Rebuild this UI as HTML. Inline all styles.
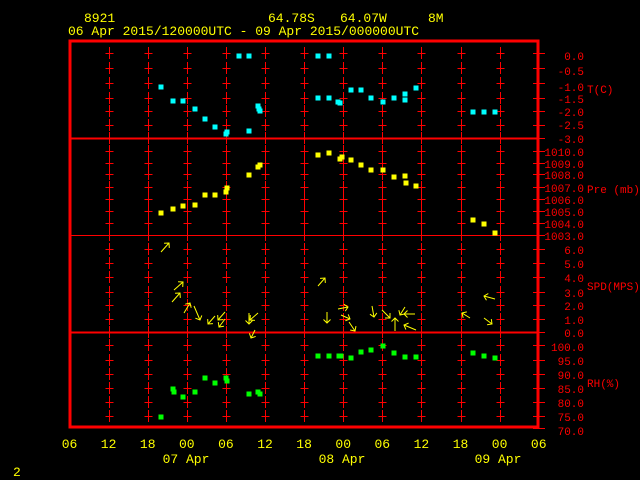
<!DOCTYPE html>
<html><head><meta charset="utf-8"><style>
html,body{margin:0;padding:0;background:#000;width:640px;height:480px;overflow:hidden}
svg{display:block}
text{font-family:"Liberation Mono","DejaVu Sans Mono",monospace}
</style></head><body>
<svg id="s" width="640" height="480" xmlns="http://www.w3.org/2000/svg">
<rect width="640" height="480" fill="#000"/>
<g fill="#ffff00" font-size="13">
<text x="84" y="22">8921</text>
<text x="268" y="22">64.78S</text>
<text x="340" y="22">64.07W</text>
<text x="428" y="22">8M</text>
<text x="68" y="35">06 Apr 2015/120000UTC - 09 Apr 2015/000000UTC</text>
<text x="13" y="476">2</text>
</g>
<g id="grid" stroke="#ff0000" stroke-width="1"></g>
<g id="pts"></g>
<g id="arr" stroke="#ffff00" stroke-width="1" fill="none"></g>
<g id="lab" fill="#ff0000" font-size="11"></g>
<g id="bl" fill="#ffff00" font-size="13" text-anchor="middle"></g>
</svg>
<script>
var NS="http://www.w3.org/2000/svg";
function el(p,t,a,txt){var e=document.createElementNS(NS,t);for(var k in a)e.setAttribute(k,a[k]);if(txt!==undefined)e.textContent=txt;document.getElementById(p).appendChild(e);return e;}
var cols=[];for(var i=1;i<12;i++)cols.push(69.5+39.1*i);
var ticks=[53,68,83,98,111,125,138,151,163,174,187,199,211,223,235,249,263,277,292,305,319,332,345,360,374,388,402,416];
var cross={138:0,235:0,332:0};
cols.forEach(function(x){x=Math.round(x)+0.5;
 ticks.forEach(function(y){
  el("grid","line",{x1:x,x2:x,y1:y-6,y2:y+6});
  if(!(y in cross)) el("grid","line",{x1:x-4,x2:x+4,y1:y+0.5,y2:y+0.5});
 });
});
// right-side ticks
ticks.forEach(function(y){el("grid","line",{x1:533,x2:545,y1:y+0.5,y2:y+0.5});});
el("grid","line",{x1:533,x2:545,y1:428.5,y2:428.5});
// dividers
el("grid","line",{x1:70,x2:538,y1:138.5,y2:138.5,"stroke-width":2});
el("grid","line",{x1:70,x2:538,y1:235.5,y2:235.5,"stroke-width":1});
el("grid","line",{x1:70,x2:538,y1:332.5,y2:332.5,"stroke-width":2});
// frame
el("grid","rect",{x:70,y:41,width:468,height:386,fill:"none","stroke-width":3});
// labels
var L=[["0.0",56],["-0.5",71],["-1.0",87],["-1.5",99],["-2.0",112],["-2.5",125],["-3.0",139],
["1010.0",152],["1009.0",164],["1008.0",175],["1007.0",188],["1006.0",200],["1005.0",212],["1004.0",224],["1003.0",236],
["6.0",250],["5.0",264],["4.0",278],["3.0",293],["2.0",306],["1.0",320],["0.0",333],
["100.0",347],["95.0",361],["90.0",375],["85.0",389],["80.0",403],["75.0",417],["70.0",431]];
L.forEach(function(l){el("lab","text",{x:584,y:l[1]+4,"text-anchor":"end"},l[0]);});
[["T(C)",89],["Pre (mb)",189],["SPD(MPS)",286],["RH(%)",383]].forEach(function(l){el("lab","text",{x:587,y:l[1]+4},l[0]);});
// bottom
var bt=["06","12","18","00","06","12","18","00","06","12","18","00","06"];
bt.forEach(function(t,i){el("bl","text",{x:69.5+39.1*i,y:448},t);});
[["07 Apr",186],["08 Apr",342],["09 Apr",498]].forEach(function(d){el("bl","text",{x:d[1],y:463},d[0]);});
// points
function P(c,a){a.forEach(function(p){el("pts","rect",{x:p[0]-2.5,y:p[1]-2.5,width:5,height:5,fill:c});});}
P("#00ffff",[[161,87],[173,101],[183,101],[195,109],[205,119],[215,127],[226,134],[227,132],[239,56],[249,56],[249,131],[258,106],[259,109],[260,111],[318,56],[329,56],[318,98],[329,98],[338,102],[340,103],[351,90],[361,90],[371,98],[383,102],[394,98],[405,100],[405,94],[416,88],[473,112],[484,112],[495,112]]);
P("#ffff00",[[161,213],[173,209],[183,206],[195,205],[205,195],[215,195],[226,192],[227,188],[249,175],[258,167],[260,165],[318,155],[329,153],[340,159],[342,157],[351,160],[361,165],[371,170],[383,170],[394,177],[405,176],[406,183],[416,186],[473,220],[484,224],[495,233]]);
P("#00ff00",[[161,417],[173,389],[174,392],[183,397],[195,392],[205,378],[215,383],[226,378],[227,381],[249,394],[258,392],[260,394],[318,356],[329,356],[339,356],[341,356],[351,358],[361,352],[371,350],[383,346],[394,353],[405,357],[416,357],[473,353],[484,356],[495,358]]);
// arrows
var A=[[161,252,169,243],[174,290,183,282],[172,302,180,293],[184,313,190,303],[194,306,200,320],[215,316,208,324],[225,312,218,320],[225,319,219,327],[249,313,249,324],[258,313,250,320],[255,330,251,338],
[318,286,325,278],[327,312,327,323],[338,309,348,307],[341,315,350,319],[349,322,355,331],[372,306,374,317],[382,310,390,318],[405,307,400,315],[415,314,404,314],[395,331,395,318],[416,330,404,325],[470,318,462,313],[495,299,484,296],[484,318,492,324]];
A.forEach(function(a){var x0=a[0],y0=a[1],x1=a[2],y1=a[3];var dx=x1-x0,dy=y1-y0,l=Math.sqrt(dx*dx+dy*dy);var ux=dx/l,uy=dy/l,h=5;
 var ax=x1-h*(ux*0.7-uy*0.7),ay=y1-h*(uy*0.7+ux*0.7),bx=x1-h*(ux*0.7+uy*0.7),by=y1-h*(uy*0.7-ux*0.7);
 el("arr","path",{d:"M"+x0+" "+y0+"L"+x1+" "+y1+"M"+ax+" "+ay+"L"+x1+" "+y1+"L"+bx+" "+by});});
</script>
</body></html>
